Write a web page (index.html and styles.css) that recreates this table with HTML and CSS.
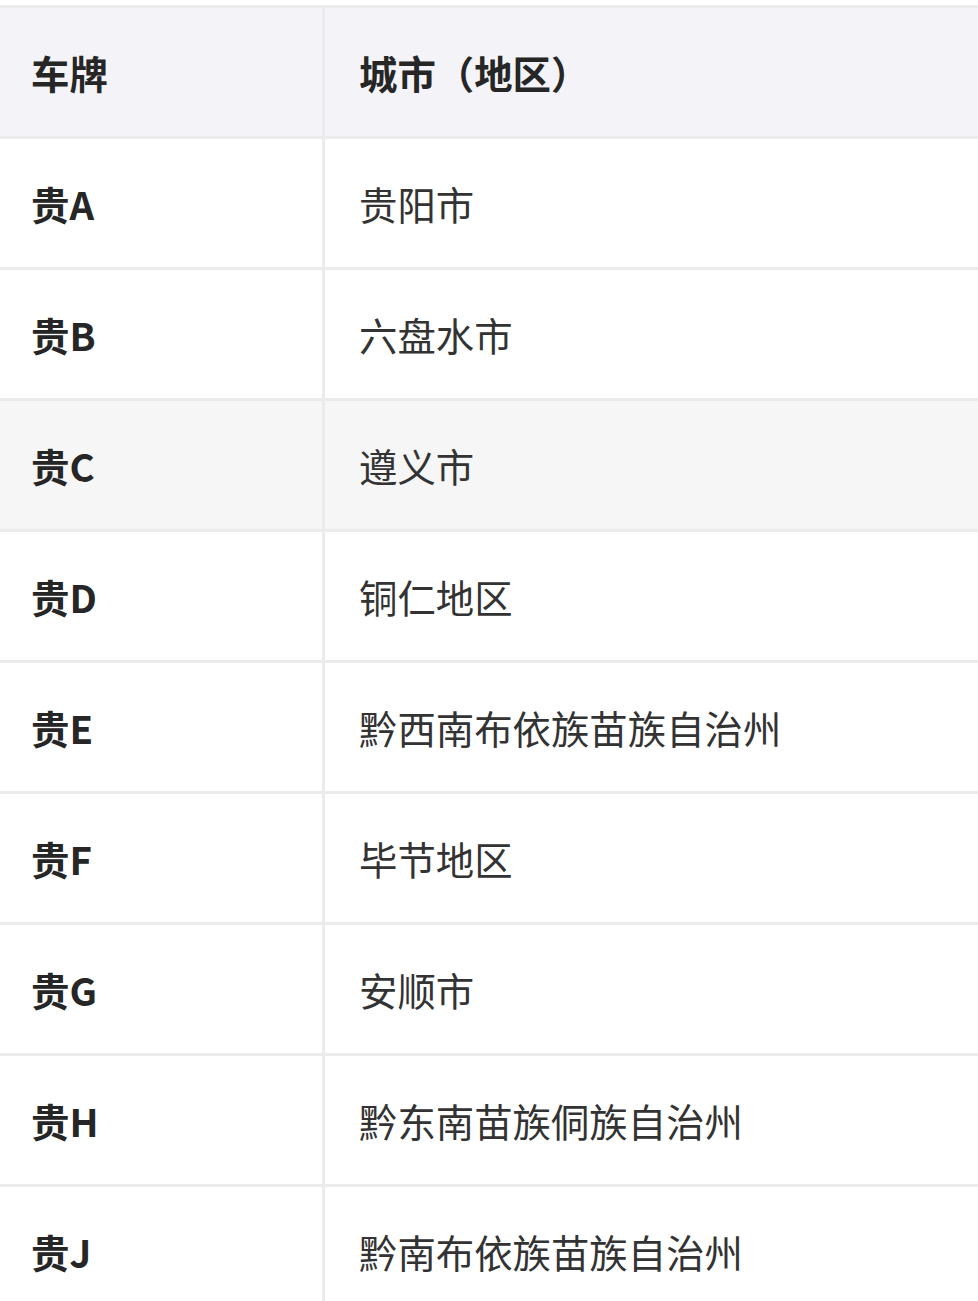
FILE: index.html
```html
<!DOCTYPE html>
<html lang="zh-CN">
<head>
<meta charset="utf-8">
<link rel="stylesheet" href="styles.css">
</head>
<body>
<div class="table">
  <div class="row head"><div class="cell key">车牌</div><div class="cell val">城市（地区）</div></div>
  <div class="row"><div class="cell key">贵A</div><div class="cell val">贵阳市</div></div>
  <div class="row"><div class="cell key">贵B</div><div class="cell val">六盘水市</div></div>
  <div class="row alt"><div class="cell key">贵C</div><div class="cell val">遵义市</div></div>
  <div class="row"><div class="cell key">贵D</div><div class="cell val">铜仁地区</div></div>
  <div class="row"><div class="cell key">贵E</div><div class="cell val">黔西南布依族苗族自治州</div></div>
  <div class="row"><div class="cell key">贵F</div><div class="cell val">毕节地区</div></div>
  <div class="row"><div class="cell key">贵G</div><div class="cell val">安顺市</div></div>
  <div class="row"><div class="cell key">贵H</div><div class="cell val">黔东南苗族侗族自治州</div></div>
  <div class="row"><div class="cell key">贵J</div><div class="cell val">黔南布依族苗族自治州</div></div>
</div>
</body>
</html>
```

FILE: styles.css
```css
html, body {
  margin: 0;
  padding: 0;
  background: #ffffff;
  overflow: hidden;
}
body {
  font-family: "Noto Sans CJK SC", "Noto Sans", sans-serif;
  color: #2b2b2b;
  padding-top: 5px;
}
.table {
  border-top: 3px solid #ebebee;
}
.row {
  display: grid;
  grid-template-columns: 322px 1fr;
  height: 128px;
  border-bottom: 3px solid #ebebee;
}
.row.head {
  background: #f4f4f8;
}
.row.alt {
  background: #f6f6f7;
}
.cell {
  display: flex;
  align-items: center;
  font-size: 38.4px;
  line-height: 1;
  white-space: nowrap;
}
.key {
  padding-left: 31px;
  font-weight: 700;
  color: #262626;
}
.val {
  border-left: 3px solid #ebebee;
  padding-left: 34px;
  color: #333333;
}
.head .val {
  font-weight: 700;
  color: #262626;
}
```
